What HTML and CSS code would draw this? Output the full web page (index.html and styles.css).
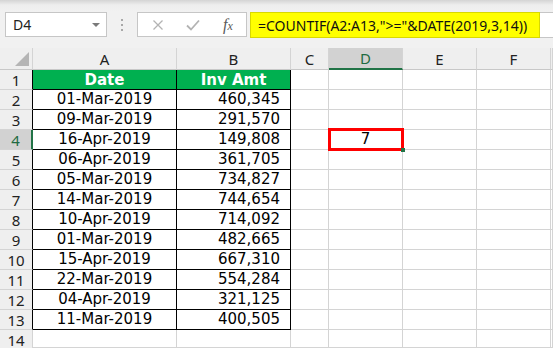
FILE: index.html
```html
<!DOCTYPE html>
<html lang="en">
<head>
  <meta charset="UTF-8">
  <meta name="viewport" content="width=device-width, initial-scale=1.0">
  <title>COUNTIF dates</title>
  <link rel="stylesheet" href="styles.css">
</head>
<body>
  <div class='app'>
    <!-- 名称框 + 编辑栏 -->
    <div class='toolbar'>
      <div class='namebox'><span>D4</span><span class='caret'></span></div>
      <div class='grip'><i></i><i></i><i></i></div>
      <div class='fxbox'>
        <svg class='ico' width="12" height="12" viewBox="0 0 12 12"><path d="M1.5 1.5 L10.5 10.5 M10.5 1.5 L1.5 10.5" stroke="#b3b3b3" stroke-width="1.3" fill="none"/></svg>
        <svg class='ico' width="14" height="12" viewBox="0 0 14 12"><path d="M1 6.5 L5 10.5 L13 1.5" stroke="#b3b3b3" stroke-width="1.8" fill="none"/></svg>
        <span class='fx'>f<small>x</small></span>
      </div>
      <div class='formula'><span class='hl'>=COUNTIF(A2:A13,"&gt;="&amp;DATE(2019,3,14))</span></div>
    </div>

    <div class='sheet'>
      <div class='h corner'><span class='tri'></span></div>
      <div class='h'>A</div>
      <div class='h'>B</div>
      <div class='h'>C</div>
      <div class='h sel'>D</div>
      <div class='h'>E</div>
      <div class='h'>F</div>
      <div class='h'></div>

      <div class='rh t'>1</div><div class='c t head'>Date</div><div class='c t head'>Inv Amt</div><div class='c'></div><div class='c'></div><div class='c'></div><div class='c'></div><div class='c'></div>
      <div class='rh t'>2</div><div class='c t d'>01-Mar-2019</div><div class='c t n'>460,345</div><div class='c'></div><div class='c'></div><div class='c'></div><div class='c'></div><div class='c'></div>
      <div class='rh t'>3</div><div class='c t d'>09-Mar-2019</div><div class='c t n'>291,570</div><div class='c'></div><div class='c'></div><div class='c'></div><div class='c'></div><div class='c'></div>
      <div class='rh t sel'>4</div><div class='c t d'>16-Apr-2019</div><div class='c t n'>149,808</div><div class='c'></div><div class='c cur'>7</div><div class='c'></div><div class='c'></div><div class='c'></div>
      <div class='rh t'>5</div><div class='c t d'>06-Apr-2019</div><div class='c t n'>361,705</div><div class='c'></div><div class='c'></div><div class='c'></div><div class='c'></div><div class='c'></div>
      <div class='rh t'>6</div><div class='c t d'>05-Mar-2019</div><div class='c t n'>734,827</div><div class='c'></div><div class='c'></div><div class='c'></div><div class='c'></div><div class='c'></div>
      <div class='rh t'>7</div><div class='c t d'>14-Mar-2019</div><div class='c t n'>744,654</div><div class='c'></div><div class='c'></div><div class='c'></div><div class='c'></div><div class='c'></div>
      <div class='rh t'>8</div><div class='c t d'>10-Apr-2019</div><div class='c t n'>714,092</div><div class='c'></div><div class='c'></div><div class='c'></div><div class='c'></div><div class='c'></div>
      <div class='rh t'>9</div><div class='c t d'>01-Mar-2019</div><div class='c t n'>482,665</div><div class='c'></div><div class='c'></div><div class='c'></div><div class='c'></div><div class='c'></div>
      <div class='rh t'>10</div><div class='c t d'>15-Apr-2019</div><div class='c t n'>667,310</div><div class='c'></div><div class='c'></div><div class='c'></div><div class='c'></div><div class='c'></div>
      <div class='rh t'>11</div><div class='c t d'>22-Mar-2019</div><div class='c t n'>554,284</div><div class='c'></div><div class='c'></div><div class='c'></div><div class='c'></div><div class='c'></div>
      <div class='rh t'>12</div><div class='c t d'>04-Apr-2019</div><div class='c t n'>321,125</div><div class='c'></div><div class='c'></div><div class='c'></div><div class='c'></div><div class='c'></div>
      <div class='rh t'>13</div><div class='c t d'>11-Mar-2019</div><div class='c t n'>400,505</div><div class='c'></div><div class='c'></div><div class='c'></div><div class='c'></div><div class='c'></div>
      <div class='rh last'>14</div><div class='c'></div><div class='c'></div><div class='c'></div><div class='c'></div><div class='c'></div><div class='c'></div><div class='c'></div>
    </div>
  </div>
</body>
</html>
```

FILE: styles.css
```css
body{
  margin:0px;
  background:#ffffff;
}
.app{
  width:553px;
  height:348px;
  overflow:hidden;
}
/* 上方编辑栏 */
.toolbar{
  height:48px;
  box-sizing:border-box;
  padding-top:12px;
  display:flex;
  align-items:flex-start;
  background:linear-gradient(#d4d4d4 0px, #eeeeee 5px, #f1f1f1 12px);
  font-family:"Noto Sans", "Open Sans", sans-serif;
}
.namebox{
  margin-left:5px;
  width:102px;
  height:25px;
  box-sizing:border-box;
  border:1px solid #c6c6c6;
  background:#ffffff;
  display:flex;
  align-items:center;
  justify-content:space-between;
  padding:0 6px 0 7px;
  font-size:14px;
  color:#222;
}
.caret{
  width:0;
  height:0;
  border-left:4px solid transparent;
  border-right:4px solid transparent;
  border-top:4px solid #7a7a7a;
}
.grip{
  width:30px;
  height:25px;
  display:flex;
  flex-direction:column;
  align-items:center;
  justify-content:center;
  gap:3px;
}
.grip i{
  width:2px;
  height:2px;
  background:#a8a8a8;
}
.fxbox{
  width:110px;
  height:25px;
  box-sizing:border-box;
  border:1px solid #c6c6c6;
  background:#ffffff;
  display:flex;
  align-items:center;
  padding-left:14px;
}
.ico{
  display:block;
}
.fxbox .ico + .ico{
  margin-left:22px;
}
.fx{
  margin-left:23px;
  font-family:"Liberation Serif", serif;
  font-style:italic;
  font-size:16px;
  color:#5a5a5a;
}
.fx small{
  font-size:12px;
}
.formula{
  margin-left:3px;
  flex:1;
  height:26px;
  box-sizing:border-box;
  border:1px solid #c6c6c6;
  border-right:none;
  background:#ffffff;
  display:flex;
}
.hl{
  background:#ffff00;
  display:flex;
  align-items:center;
  padding:0 12px 0 7px;
  margin:-1px 0 -1px -1px;
  border:1px solid #d8d800;
  font-size:14px;
  color:#111;
  white-space:nowrap;
}
/* 表格区域 */
.sheet{
  display:grid;
  grid-template-columns:33px 144px 114px 38px 74px 74px 74px 2px;
  grid-template-rows:22px repeat(13, 20px) 18px;
  font-family:"DejaVu Sans", Verdana, sans-serif;
  font-size:15px;
  color:#000;
}
.h, .rh, .c{
  box-sizing:border-box;
  border-right:1px solid #d4d4d4;
  border-bottom:1px solid #d4d4d4;
  display:flex;
  align-items:center;
  justify-content:center;
  white-space:nowrap;
  overflow:hidden;
}
.h, .rh{
  background:#efefef;
  font-family:"Noto Sans", "Open Sans", sans-serif;
  color:#222;
  line-height:16px;
}
.h{
  font-size:15px;
  border-bottom-color:#c8c8c8;
}
.rh{
  font-size:15px;
  padding-top:1px;
}
.rh.last{
  border-bottom:none;
  padding-top:2px;
}
.corner{
  position:relative;
}
.tri{
  position:absolute;
  right:3px;
  bottom:3px;
  width:0;
  height:0;
  border-left:14px solid transparent;
  border-bottom:14px solid #b5b5b5;
}
.h.sel{
  background:#d2d2d2;
  color:#1f6b42;
  border-bottom:2px solid #217346;
}
.rh.t{
  border-right-color:#000;
}
.rh.sel{
  background:#d2d2d2;
  color:#1f6b42;
  border-right:2px solid #217346;
}
.c.t{
  border-right-color:#000;
  border-bottom-color:#000;
}
.head{
  background:#00b050;
  color:#ffffff;
  font-weight:bold;
}
.d, .n, .cur{
  align-items:flex-end;
  padding-bottom:1px;
}
.n{
  justify-content:flex-end;
  padding-right:10px;
}
/* 当前选中的单元格 */
.cur{
  position:relative;
  overflow:visible;
}
.cur::before{
  content:'';
  position:absolute;
  top:-2px;
  left:-1px;
  right:-2px;
  bottom:-2px;
  border:3px solid #ff0000;
  z-index:1;
}
.cur::after{
  content:'';
  position:absolute;
  right:-3px;
  bottom:-3px;
  width:4px;
  height:4px;
  background:#217346;
  z-index:2;
}
```
